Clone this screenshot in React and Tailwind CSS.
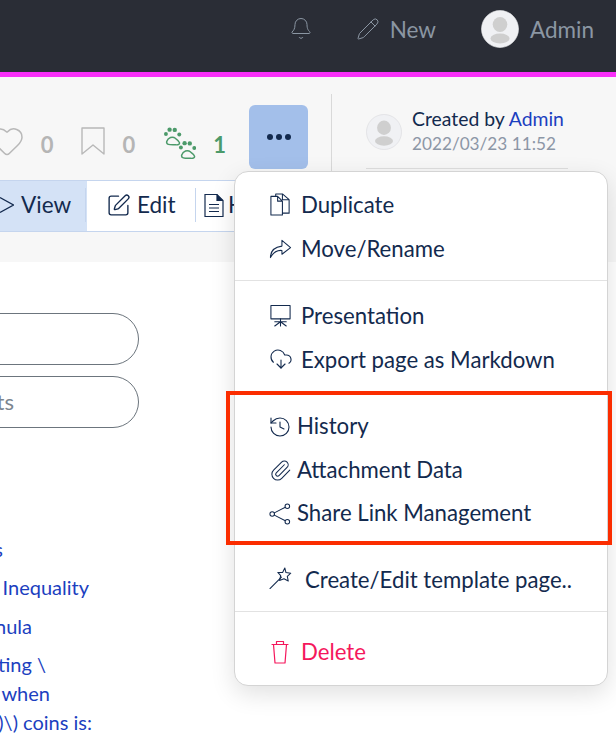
import React from "react";
import { Bell, Pencil, Heart, SquarePen, History, Paperclip, CloudDownload } from "lucide-react";

const Ico = ({ children, className = "", viewBox = "0 0 24 24", sw = "1.1" }) => (
  <svg viewBox={viewBox} fill="none" stroke="currentColor" strokeWidth={sw} strokeLinecap="round" strokeLinejoin="round" className={className}>{children}</svg>
);

const Avatar = ({ className, head, body, ring }) => (
  <div className={className}>
    <svg viewBox="0 0 38 38" className="w-full h-full">
      <circle cx="19" cy="19" r="18.500" fill="#f0f1f4" stroke={ring} strokeWidth="0.6" />
      <ellipse cx="19" cy="14.500" rx="7.300" ry="7.600" fill={head} />
      <ellipse cx="19" cy="28.500" rx="9.500" ry="5" fill={body} />
    </svg>
  </div>
);

const Paw = ({ x, y }) => (
  <g transform={`translate(${x} ${y}) scale(1.15)`}>
    <path d="M1.500 13.500c1.200-3.600 5-4.800 7.800-2.600 1.800 1.300 3 2.400 3.300 3.600.3 1.400-1 2-3 1.900-2.400-.1-5 .2-6.700-.4-1.200-.4-1.700-1.300-1.400-2.500z" fill="none" stroke="#4c9a6a" strokeWidth="1.300" />
    <circle cx="0.800" cy="7" r="1.700" fill="#4c9a6a" />
    <circle cx="4" cy="3.200" r="1.900" fill="#4c9a6a" />
    <circle cx="8.500" cy="3.400" r="1.900" fill="#4c9a6a" />
    <circle cx="12.400" cy="7.400" r="1.700" fill="#4c9a6a" />
  </g>
);

const Item = ({ icon, children, ml = "ml-[34px]", gap = "w-[32px]", color = "text-[#132a4e]" }) => (
  <div className={`h-[43.5px] flex items-center ${ml} ${color} text-[22.2px] whitespace-nowrap`}>
    <span className={`${gap} shrink-0 flex items-center`}>{icon}</span>
    <span>{children}</span>
  </div>
);

const blueLine = "flex justify-end whitespace-nowrap text-[#1c3fc0] text-[20px] leading-[29px]";

export default function App() {
  return (
    <div className="relative w-[616px] h-[746px] overflow-hidden bg-white" style={{ fontFamily: "Lato, sans-serif" }}>
      <header className="h-[72px] pb-[14px] bg-[#2a2d36] flex items-center justify-end text-[#8b96a3] text-[22.5px]">
        <Bell className="w-[24px] h-[25px] mr-[43px] -mt-[1px]" strokeWidth={1} />
        <Pencil className="w-[24px] h-[24px] mr-[10px]" strokeWidth={1} />
        <span className="mr-[45px] mt-[1px]">New</span>
        <Avatar className="w-[38px] h-[38px] mr-[11px]" head="#cfcfcf" body="#cfcfcf" ring="#f0f1f4" />
        <span className="mr-[22px] mt-[1px]">Admin</span>
      </header>
      <div className="h-[5px] bg-[#f92ff9]" />

      <div className="h-[185px] bg-[#f7f7f7] flex">
        <div className="w-[331px] shrink-0 flex flex-col">
          <div className="h-[103px] flex items-start pr-[105px] justify-end relative">
            <div className="flex items-center mt-[43px] text-[22px] font-bold text-[#b5b5b5]">
              <Heart className="w-[36px] h-[36px] mr-[16px] text-[#b8b8b8]" strokeWidth={1} />
              <span className="mr-[28px] mt-[8px]">0</span>
              <Ico viewBox="0 0 24 28" sw="1.400" className="w-[24px] h-[28px] mr-[17px] text-[#b8b8b8]"><path d="M1 1h22v26l-11-9-11 9z" /></Ico>
              <span className="mr-[28px] mt-[8px]">0</span>
              <svg viewBox="0 0 33 33" className="w-[33px] h-[33px] mr-[17px] mt-[3px]">
                <Paw x={2} y={0} />
                <Paw x={17} y={13.500} />
              </svg>
              <span className="mt-[8px] text-[#4c9a6a]">1</span>
            </div>
            <div className="absolute left-[249px] top-[28px] w-[59px] h-[64px] rounded-[6px] bg-[#a3bfea] flex items-center justify-center gap-[3px]">
              <span className="w-[6px] h-[6px] rounded-full bg-[#132a4e]" />
              <span className="w-[6px] h-[6px] rounded-full bg-[#132a4e]" />
              <span className="w-[6px] h-[6px] rounded-full bg-[#132a4e]" />
            </div>
          </div>
          <div className="h-[52px] w-[331px] bg-white border-y border-[#c5d5ee] flex items-stretch text-[#132a4e] text-[22.5px]">
            <div className="w-[87px] bg-[#d4e2f6] flex items-center shrink-0 pb-[2px]">
              <svg viewBox="0 0 14 20" className="w-[14px] h-[20px] mr-[7px]" fill="none" stroke="#132a4e" strokeWidth="1.200"><path d="M0 2.500 13.500 10 0 17.500" /></svg>
              <span>View</span>
              <span className="ml-auto mr-[1px] w-px h-[34px] bg-[#c5d5ee]" />
            </div>
            <div className="w-[109px] flex items-center pl-[19px] shrink-0 pb-[2px]">
              <SquarePen className="w-[25px] h-[25px] mr-[6px]" strokeWidth={1.300} />
              <span>Edit</span>
              <span className="ml-auto w-px h-[34px] bg-[#c5d5ee]" />
            </div>
            <div className="flex items-center pl-[8px] pb-[2px]">
              <svg viewBox="0 0 20 24" className="w-[20px] h-[25px] mr-[4px]" fill="none" stroke="#132a4e" strokeWidth="1.200">
                <path d="M1 1h12l6 6v16H1z" /><path d="M13 1v6h6" fill="#132a4e" /><path d="M5 11h10M5 14.500h10M5 18h10" />
              </svg>
              <span>H</span>
            </div>
          </div>
        </div>
        <div className="flex-1 border-l border-[#d9d9d9] h-[95px] mt-[17px] pl-[34px] pt-[20px]">
          <div className="w-[202px] h-[55px] border-b border-[#dedede] flex items-start">
            <Avatar className="w-[36px] h-[36px] mr-[10px] shrink-0" head="#cfcfcf" body="#cfcfcf" ring="#d8d8dc" />
            <div className="-mt-[8px] whitespace-nowrap">
              <div className="text-[19.4px] leading-[26px] text-[#132a4e]">Created by <span className="text-[#1c3fc0]">Admin</span></div>
              <div className="text-[17.2px] leading-[24px] text-[#8c96a6]">2022/03/23 11:52</div>
            </div>
          </div>
        </div>
      </div>

      <div className="w-[139px] pt-[51px]">
        <div className="h-[52px] w-[300px] -ml-[161px] rounded-full border border-[#6c757d]" />
        <div className="h-[52px] w-[300px] -ml-[161px] mt-[11px] rounded-full border border-[#6c757d] flex items-center justify-end pr-[124px] pb-[2px] text-[22px] text-[#7b8590]">ts</div>
      </div>
      <div className="w-[93px] mt-[107px] flex flex-col">
        <div className={`${blueLine} w-[3px]`}>s</div>
        <div className={`${blueLine} w-[89px] mt-[9px]`}>Inequality</div>
        <div className={`${blueLine} w-[32px] mt-[10px]`}>nula</div>
        <div className={`${blueLine} w-[46px] mt-[9px]`}>ting \</div>
        <div className={`${blueLine} w-[50px]`}>when</div>
        <div className={`${blueLine} w-[92px]`}>)\) coins is:</div>
      </div>

      <div className="absolute left-[234px] top-[171px] w-[374px] h-[515px] bg-white rounded-[14px] border border-[#d4d4d4] shadow-[0_8px_24px_rgba(0,0,0,0.12)] pt-[11px]">
        <Item icon={<Ico className="w-[23px] h-[23px]"><path d="M2 3.500h7l5 5V23H2zM9 3.500v5h5" /><path d="M7 3.500V1h7l7 6v14h-7M14 1v6h7" /></Ico>}>Duplicate</Item>
        <Item icon={<Ico className="w-[23px] h-[23px]"><path d="M13.500 3.500 22.500 11l-9 7v-4C8 13.500 4.500 16 1.500 21.500c0-6.500 4-11 12-12z" /></Ico>}>Move/Rename</Item>
        <div className="h-px bg-[#e2e2e2] mt-[10px] mb-[13px]" />
        <Item icon={<Ico className="w-[23px] h-[23px]"><rect x="2" y="1.500" width="20" height="14" /><path d="M12 15.500V23M12 18.500l-6 4.500M12 18.500l6 4.500M6 18.500h12" /></Ico>}>Presentation</Item>
        <Item icon={<CloudDownload className="w-[24px] h-[24px]" strokeWidth={1.100} />}>Export page as Markdown</Item>
        <div className="h-[23px]" />
        <Item gap="w-[28px]" icon={<History className="w-[24px] h-[24px] mt-[3px] -ml-px" strokeWidth={1.100} />}>History</Item>
        <Item gap="w-[28px]" icon={<Paperclip className="w-[23px] h-[23px] mt-[2px]" strokeWidth={1.100} />}>Attachment Data</Item>
        <Item gap="w-[28px]" icon={<Ico className="w-[22px] h-[22px] mt-[3px]"><circle cx="3.500" cy="12" r="2.500" /><circle cx="20" cy="3.500" r="2.500" /><circle cx="20" cy="20.500" r="2.500" /><path d="m5.800 10.800 12-6.200M5.800 13.200l12 6.200" /></Ico>}>Share Link Management</Item>
        <div className="h-[23px]" />
        <Item gap="w-[36px]" icon={<Ico className="w-[23px] h-[24px] -mt-[3px]"><path d="M1 23 13 11" /><path d="m16.500 1.500 1.200 4.800 5 .7-3.600 3.200 1 5-4.500-2.400-4.600 1.700 1.200-4.900-3-3.400 5 .1z" /></Ico>}>Create/Edit template page..</Item>
        <div className="h-px bg-[#e2e2e2] mt-[10px] mb-[18px]" />
        <Item ml="ml-[36px]" gap="w-[30px]" color="text-[#f5175c]" icon={<Ico viewBox="0 0 18 24" sw="1.200" className="w-[18px] h-[24px]"><path d="M1 4.500h16M5.500 4.500V1.500h7v3M2.500 4.500l1.500 18.500h10l1.500-18.500" /></Ico>}>Delete</Item>
      </div>

      <div className="absolute left-[226px] top-[391px] w-[386px] h-[154px] border-[4px] border-[#fb2d00]" />
    </div>
  );
}
